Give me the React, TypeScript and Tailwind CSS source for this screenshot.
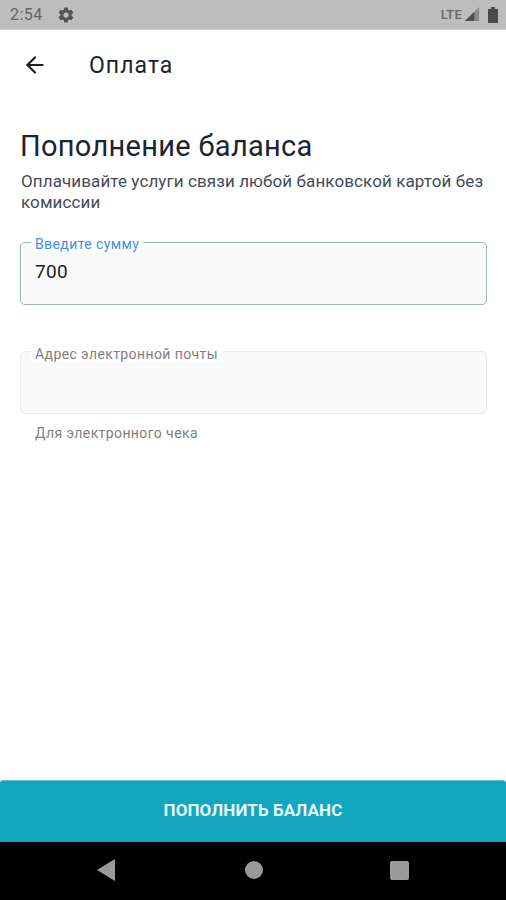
import { ArrowLeft } from "lucide-react";

function Gear() {
  return (
    <svg viewBox="0 0 24 24" className="w-[18px] h-[18px] ml-[14px] fill-[#555]">
      <path d="M19.4 13c.04-.33.06-.66.06-1s-.02-.67-.07-1l2.11-1.65a.5.5 0 0 0 .12-.64l-2-3.46a.5.5 0 0 0-.61-.22l-2.49 1a7.3 7.3 0 0 0-1.69-.98l-.38-2.65A.49.49 0 0 0 13.96 2h-4a.49.49 0 0 0-.49.42l-.38 2.65c-.61.25-1.17.59-1.69.98l-2.49-1a.49.49 0 0 0-.61.22l-2 3.46a.49.49 0 0 0 .12.64L4.53 11c-.05.33-.07.67-.07 1s.02.67.07 1l-2.11 1.65a.5.5 0 0 0-.12.64l2 3.46c.12.22.39.3.61.22l2.49-1c.52.4 1.08.73 1.69.98l.38 2.65c.03.24.24.4.49.4h4c.25 0 .46-.16.49-.42l.38-2.65c.61-.25 1.17-.59 1.69-.98l2.49 1c.22.08.49 0 .61-.22l2-3.46a.5.5 0 0 0-.12-.64L19.4 13zM12 15.5a3.5 3.5 0 1 1 0-7 3.5 3.5 0 0 1 0 7z" />
    </svg>
  );
}

function StatusBar() {
  return (
    <div className="h-[30px] bg-[#bdbdbd] border-b border-[#d4d4d4] flex items-center pl-[10px] pr-[7px] shrink-0">
      <span className="text-[16px] text-[#666] tracking-[0.5px]">2:54</span>
      <Gear />
      <div className="ml-auto flex items-center">
        <span className="text-[13px] text-[#666] font-medium tracking-[0.2px]">LTE</span>
        <svg viewBox="0 0 18 18" className="w-[17px] h-[17px] ml-[2px]">
          <path d="M1 16 L16 1 V16 Z" fill="#8a8a8a" />
          <path d="M1 16 L11 6 V16 Z" fill="#4f4f4f" />
        </svg>
        <svg viewBox="0 0 12 18" className="w-[12px] h-[18px] ml-[6px]">
          <path d="M4 1 H8 V3 H11 V17 H1 V3 H4 Z" fill="#4a4a4a" />
        </svg>
      </div>
    </div>
  );
}

function NavBar() {
  return (
    <div className="h-[72px] flex items-center pl-[22px] shrink-0">
      <ArrowLeft className="w-[26px] h-[26px] text-[#161d26] -mt-[2px]" strokeWidth={2} />
      <span className="ml-[41px] text-[23px] text-[#1b2430] tracking-[1.05px]">Оплата</span>
    </div>
  );
}

export default function App() {
  return (
    <div className="w-[506px] h-[900px] bg-white flex flex-col font-['Roboto',sans-serif] overflow-hidden">
      <StatusBar />
      <NavBar />

      <div className="flex-1 pl-[20px] pr-[19px] pt-[27px]">
        <h1 className="text-[29px] leading-[34px] text-[#1b2430] tracking-[0.3px]">Пополнение баланса</h1>
        <p className="mt-[8px] pl-[1px] text-[17px] leading-[21px] text-[#444c56] tracking-[0.1px]">
          Оплачивайте услуги связи любой банковской картой без комиссии
        </p>

        <div className="relative mt-[29px] h-[63px] rounded-[5px] border border-[#9db3b5] bg-[#fafafa]">
          <span className="absolute -top-[7px] left-[10px] px-[4px] bg-white text-[14px] leading-[16px] text-[#3f8ee8] tracking-[0.4px]">
            Введите сумму
          </span>
          <div className="pl-[14px] pt-[17px] text-[19px] leading-[24px] text-[#222] tracking-[0.3px]">700</div>
        </div>

        <div className="relative mt-[46px] h-[63px] rounded-[5px] border border-[#ececec] bg-[#fafafa]">
          <span className="absolute -top-[6px] left-[10px] px-[4px] bg-white text-[14px] leading-[16px] text-[#808080] tracking-[0.4px]">
            Адрес электронной почты
          </span>
        </div>
        <p className="mt-[11px] pl-[15px] text-[14px] leading-[16px] text-[#808080] tracking-[0.4px]">Для электронного чека</p>
      </div>

      <div className="h-[62px] bg-[#12a7bf] rounded-t-[3px] border-t border-[#5fbdd0] flex items-center justify-center shrink-0">
        <span className="text-[17px] font-bold text-[#e6f6fa] -mt-[1px] tracking-[0.1px]">ПОПОЛНИТЬ БАЛАНС</span>
      </div>

      <div className="h-[58px] bg-black flex items-center justify-center shrink-0">
        <div className="flex items-center -mt-[2px] -ml-[1px]">
          <svg viewBox="0 0 18 22" className="w-[18px] h-[22px]">
            <path d="M18 0 V22 L0 11 Z" fill="#9a9a9a" />
          </svg>
          <div className="ml-[130px] w-[18px] h-[18px] rounded-full bg-[#9a9a9a]" />
          <div className="ml-[127px] w-[19px] h-[19px] rounded-[2px] bg-[#9a9a9a]" />
        </div>
      </div>
    </div>
  );
}
